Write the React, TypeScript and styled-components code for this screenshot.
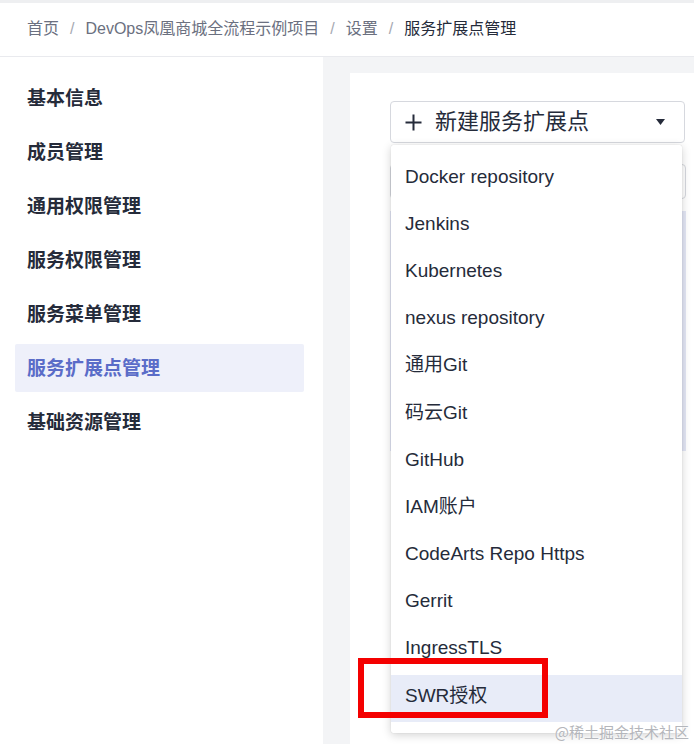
import React from "react";
import styled, { createGlobalStyle } from "styled-components";

const Global = createGlobalStyle`
  html, body { margin: 0; padding: 0; background: #f3f4f6; }
  body { font-family: "Liberation Sans", "Noto Sans CJK SC", sans-serif; overflow: hidden; }
  * { box-sizing: border-box; }
`;

const Page = styled.div`
  position: relative;
  width: 694px;
  height: 744px;
  display: flex;
  flex-direction: column;
  background: #f3f4f6;
  overflow: hidden;
`;

const Header = styled.header`
  height: 54px;
  margin-top: 3px;
  flex: none;
  background: #fff;
  border-bottom: 1px solid #e9eaee;
  display: flex;
  align-items: center;
  padding: 0 0 2px 27px;
  font-size: 16px;
  line-height: 1;
`;

const Crumb = styled.span<{ $current?: boolean }>`
  color: ${(p) => (p.$current ? "#252b3a" : "#6b7080")};
`;

const Sep = styled.span`
  color: #a6a9b2;
  padding: 0 11px;
`;

const Body = styled.div`
  flex: 1;
  display: flex;
  min-height: 0;
`;

const Sidebar = styled.nav`
  width: 323px;
  flex: none;
  background: #fff;
  padding: 17px 19px 0 15px;
  display: flex;
  flex-direction: column;
  gap: 6px;
`;

const NavItem = styled.div<{ $active?: boolean }>`
  height: 48px;
  display: flex;
  align-items: center;
  padding-left: 12px;
  font-size: 19px;
  font-weight: 700;
  line-height: 1;
  border-radius: 2px;
  color: ${(p) => (p.$active ? "#5a6cc8" : "#252b3a")};
  background: ${(p) => (p.$active ? "#eef0fa" : "transparent")};
`;

const Main = styled.main`
  flex: 1;
  padding: 16px 0 0 27px;
  min-width: 0;
`;

const Card = styled.section`
  background: #fff;
  height: 100%;
  padding: 28px 0 0 40px;
  display: flex;
  flex-direction: column;
`;

const SelectWrap = styled.div`
  position: relative;
  width: 295px;
`;

const SelectButton = styled.div`
  height: 42px;
  border: 1px solid #d6d8de;
  border-radius: 4px;
  display: flex;
  align-items: center;
  padding: 0 19px 0 14px;
  font-size: 22px;
  line-height: 1;
  color: #252b3a;
  background: #fff;
`;

const ButtonLabel = styled.span`
  flex: 1;
  margin-left: 13px;
`;

const Menu = styled.ul`
  position: absolute;
  top: 44px;
  left: 1px;
  width: 291px;
  margin: 0;
  padding: 11px 0;
  list-style: none;
  background: #fff;
  border-radius: 2px;
  box-shadow: 0 2px 10px rgba(0, 0, 0, 0.18), 0 0 1px rgba(0, 0, 0, 0.2);
  z-index: 2;
`;

const MenuItem = styled.li<{ $hover?: boolean }>`
  height: 47.2px;
  display: flex;
  align-items: center;
  padding: 0 0 7px 14px;
  font-size: 19px;
  line-height: 1;
  color: #252b3a;
  background: ${(p) => (p.$hover ? "#e8ecf8" : "transparent")};
`;

const SearchBox = styled.div`
  margin-top: 21px;
  width: 296px;
  height: 35px;
  border: 1px solid #d6d8de;
  border-radius: 4px;
`;

const ListPanel = styled.div`
  margin-top: 12px;
  width: 296px;
  height: 240px;
  background: #e3e6f5;
`;

const Annotation = styled.div`
  position: absolute;
  left: 358px;
  top: 658px;
  width: 190px;
  height: 60px;
  border: 6px solid #f40000;
  z-index: 3;
`;

const Watermark = styled.div`
  position: absolute;
  right: 5px;
  bottom: 5px;
  font-family: "Noto Sans CJK SC", sans-serif;
  font-size: 15px;
  line-height: 1;
  color: #b4b6bb;
  text-shadow: 0 0 2px #fff;
  z-index: 4;
`;

const TopStrip = styled.div`
  position: absolute;
  left: 0;
  top: 0;
  width: 100%;
  height: 3px;
  background: #eeeff1;
`;

function PlusIcon() {
  return (
    <svg width="17" height="17" viewBox="0 0 17 17" aria-hidden>
      <path d="M8.5 0.5v16M0.5 8.5h16" stroke="#252b3a" strokeWidth="2" fill="none" />
    </svg>
  );
}

function Caret() {
  return (
    <svg width="9" height="6" viewBox="0 0 9 6" aria-hidden>
      <path d="M0 0h9L4.5 6z" fill="#252b3a" />
    </svg>
  );
}

const navItems = ["基本信息", "成员管理", "通用权限管理", "服务权限管理", "服务菜单管理", "服务扩展点管理", "基础资源管理"];
const menuItems = [
  "Docker repository",
  "Jenkins",
  "Kubernetes",
  "nexus repository",
  "通用Git",
  "码云Git",
  "GitHub",
  "IAM账户",
  "CodeArts Repo Https",
  "Gerrit",
  "IngressTLS",
  "SWR授权",
];

export default function App() {
  return (
    <Page>
      <Global />
      <TopStrip />
      <Header>
        <Crumb>首页</Crumb>
        <Sep>/</Sep>
        <Crumb>DevOps凤凰商城全流程示例项目</Crumb>
        <Sep>/</Sep>
        <Crumb>设置</Crumb>
        <Sep>/</Sep>
        <Crumb $current>服务扩展点管理</Crumb>
      </Header>
      <Body>
        <Sidebar>
          {navItems.map((n) => (
            <NavItem key={n} $active={n === "服务扩展点管理"}>
              {n}
            </NavItem>
          ))}
        </Sidebar>
        <Main>
          <Card>
            <SelectWrap>
              <SelectButton>
                <PlusIcon />
                <ButtonLabel>新建服务扩展点</ButtonLabel>
                <Caret />
              </SelectButton>
              <Menu>
                {menuItems.map((m) => (
                  <MenuItem key={m} $hover={m === "SWR授权"}>
                    {m}
                  </MenuItem>
                ))}
              </Menu>
            </SelectWrap>
            <SearchBox />
            <ListPanel />
          </Card>
        </Main>
      </Body>
      <Annotation />
      <Watermark>@稀土掘金技术社区</Watermark>
    </Page>
  );
}
